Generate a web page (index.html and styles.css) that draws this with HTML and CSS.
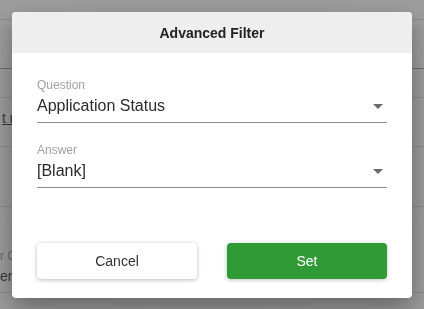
FILE: index.html
```
<!DOCTYPE html>
<html lang="en">
<head>
    <meta charset="UTF-8">
    <meta name="viewport" content="width=device-width, initial-scale=1.0">
    <title>Advanced Filter</title>
    <link rel="stylesheet" href="styles.css">
</head>
<body>
    <div class="page">
        <div class="row row-top"></div>
        <div class="row row-head"></div>
        <div class="row row-short"></div>
        <div class="row row-link"><span class="link">t n</span></div>
        <div class="row row-mid"></div>
        <div class="row row-last">
            <span class="muted">r C</span>
            <span>ers</span>
        </div>
    </div>

    <div class="overlay">
        <div class="dialog">
            <div class="dialog-header">Advanced Filter</div>

            <div class="dialog-body">
                <div class="field">
                    <label>Question</label>
                    <div class="select">
                        <span class="select-value">Application Status</span>
                        <span class="caret"></span>
                    </div>
                </div>

                <div class="field">
                    <label>Answer</label>
                    <div class="select">
                        <span class="select-value">[Blank]</span>
                        <span class="caret"></span>
                    </div>
                </div>
            </div>

            <div class="dialog-actions">
                <button class="btn btn-cancel">Cancel</button>
                <button class="btn btn-set">Set</button>
            </div>
        </div>
    </div>
</body>
</html>
```

FILE: styles.css
```
* {
    margin: 0;
    padding: 0;
    box-sizing: border-box;
}

body {
    font-family: "Liberation Sans", Arial, sans-serif;
    background: #9e9e9e;
    height: 309px;
    overflow: hidden;
}

/* page behind the overlay */
.page {
    color: #3a3a3a;
    font-size: 14px;
}

.row {
    border-bottom: 1px solid #8e8e8e;
}

.row-top {
    height: 20px;
}

.row-head {
    height: 49px;
    border-bottom-color: #6f6f6f;
}

.row-short {
    height: 29px;
}

.row-link {
    height: 49px;
    padding-top: 12px;
}

.link {
    text-decoration: underline;
    margin-left: 2px;
}

.row-mid {
    height: 60px;
}

.row-last {
    height: 86px;
    display: flex;
    flex-direction: column;
    justify-content: flex-end;
    padding-bottom: 6px;
    line-height: 20px;
}

.muted {
    color: #6a6a6a;
    font-size: 12px;
}

/* dialog */
.overlay {
    position: fixed;
    inset: 0;
    display: flex;
    justify-content: center;
    padding-top: 12px;
    background: radial-gradient(ellipse at 50% 60%, rgba(0, 0, 0, 0.06), rgba(0, 0, 0, 0));
}

.dialog {
    width: 400px;
    height: 286px;
    background: #fff;
    border-radius: 4px;
    box-shadow: 0 10px 24px rgba(0, 0, 0, 0.35);
    overflow: hidden;
    display: flex;
    flex-direction: column;
}

.dialog-header {
    height: 41px;
    background: #eeeeee;
    display: flex;
    align-items: center;
    justify-content: center;
    font-size: 14px;
    font-weight: 700;
    color: #222;
}

.dialog-body {
    padding: 25px 25px 0;
    display: flex;
    flex-direction: column;
    gap: 20px;
}

.field label {
    display: block;
    font-size: 12px;
    line-height: 14px;
    color: #a0a0a0;
    margin-bottom: 4px;
}

.select {
    display: flex;
    align-items: center;
    padding-bottom: 6px;
    border-bottom: 1px solid #8a8a8a;
}

.select-value {
    flex: 1;
    font-size: 16px;
    line-height: 20px;
    color: #2b2b2b;
}

.caret {
    width: 0;
    height: 0;
    border-left: 5px solid transparent;
    border-right: 5px solid transparent;
    border-top: 5px solid #6b6b6b;
    margin-right: 4px;
    margin-top: 1px;
}

.dialog-actions {
    margin-top: auto;
    padding: 0 25px 19px;
    display: flex;
    gap: 30px;
}

.btn {
    flex: 1;
    height: 36px;
    border: none;
    border-radius: 4px;
    font-family: inherit;
    font-size: 14px;
    cursor: pointer;
}

.btn-cancel {
    background: #fff;
    color: #333;
    box-shadow: 0 1px 4px rgba(0, 0, 0, 0.28);
}

.btn-set {
    background: #2f9a36;
    color: #fff;
    box-shadow: 0 1px 4px rgba(0, 0, 0, 0.25);
}
```
